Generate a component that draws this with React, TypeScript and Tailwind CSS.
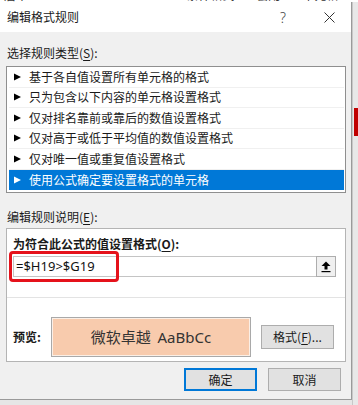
import React from "react";

const Tri = ({ white }: { white?: boolean }) => (
  <svg width="7" height="8" viewBox="0 0 7 8" className="shrink-0">
    <polygon points="0,0.5 7,4 0,7.5" fill={white ? "#ffffff" : "#000000"} />
  </svg>
);

const rules = [
  "基于各自值设置所有单元格的格式",
  "只为包含以下内容的单元格设置格式",
  "仅对排名靠前或靠后的数值设置格式",
  "仅对高于或低于平均值的数值设置格式",
  "仅对唯一值或重复值设置格式",
  "使用公式确定要设置格式的单元格",
];

export default function App() {
  return (
    <div className="w-[358px] h-[405px] overflow-hidden bg-[#e6e6e6] flex flex-col font-['Noto_Sans_CJK_SC',sans-serif] text-[12px] text-[#1a1a1a]">
      {/* excel ribbon remnant */}
      <div className="h-[2px] shrink-0 bg-white overflow-hidden">
        <div className="-mt-[11px] flex gap-[22px] pl-[4px] leading-[12px] text-[12px] text-[#333] whitespace-nowrap">
          <span>居中</span>
          <span className="text-[#2b5797]">■▾</span>
          <span>%</span>
          <span className="text-[#2b5797]">←.0 .00</span>
          <span>条件格式</span>
          <span>套用</span>
          <span>单元格</span>
        </div>
      </div>
      <div className="flex flex-1">
        <div className="w-[352px] shrink-0 flex flex-col">
          <div className="h-[398px] border-r border-b border-[#9a9a9a] flex flex-col">
            {/* title bar */}
            <div className="h-[30px] bg-white flex items-center shrink-0">
              <span className="ml-[7px] flex-1 leading-[16px]">编辑格式规则</span>
              <span className="w-[20px] text-center text-[14px] text-[#444] font-['Noto_Sans',sans-serif] font-light">?</span>
              <svg width="11" height="11" viewBox="0 0 11 11" className="ml-[31px] mr-[16px]">
                <path d="M0.5 0.5 L10.5 10.5 M10.5 0.5 L0.5 10.5" stroke="#333" strokeWidth="1" />
              </svg>
            </div>
            {/* body */}
            <div className="flex-1 bg-[#f0f0f0] px-[6px] flex flex-col">
              <div className="mt-[13px] leading-[16px] pl-[1px]">
                选择规则类型(<span className="underline underline-offset-2">S</span>):
              </div>
              <div className="mt-[5px] w-[340px] border border-[#8f8f8f] bg-white pt-0 pb-[2px] pl-[2px] pr-[1px]">
                {rules.map((r, i) => {
                  const sel = i === 5;
                  return (
                    <div
                      key={r}
                      className={
                        "h-[20.5px] flex items-center pl-[5px] gap-[7px] leading-[16px] " +
                        (sel ? "bg-[#0078d7] text-white" : "border-b border-[#f0f0f0]")
                      }
                    >
                      <Tri white={sel} />
                      <span className="ml-[1px]">{r}</span>
                    </div>
                  );
                })}
              </div>
              <div className="mt-[16px] leading-[16px] pl-[1px]">
                编辑规则说明(<span className="underline underline-offset-2">E</span>):
              </div>
              <div className="relative mt-[3px] w-[340px] h-[134px] border border-[#b4b4b4] bg-white px-[6px] pt-[7px] flex flex-col">
                <div className="leading-[16px] font-bold">
                  为符合此公式的值设置格式(<span className="underline underline-offset-2">O</span>):
                </div>
                <div className="mt-[4px] w-[323px] h-[21px] flex">
                  <div className="flex-1 border-y border-l border-[#c4c4c4] pl-[2px] flex items-center font-['Noto_Sans',sans-serif] text-[13px] text-[#111]">
                    =$H19&gt;$G19
                  </div>
                  <div className="w-[20px] h-[21px] border border-[#adadad] bg-[#f0f0f0] flex items-center justify-center">
                    <svg width="10" height="13" viewBox="0 0 10 13">
                      <polygon points="0.5,6 5,1.5 9.5,6" fill="#000" />
                      <rect x="3.5" y="5.5" width="3" height="4" fill="#000" />
                      <rect x="0.5" y="11" width="9" height="1.2" fill="#000" />
                    </svg>
                  </div>
                </div>
                <div className="mt-[20px] -mx-[6px] h-px bg-[#e3e3e3]" />
                <div className="mt-[19px] flex items-center">
                  <span className="w-[38px] font-bold leading-[16px]">预览:</span>
                  <div className="w-[200px] h-[40px] border border-[#a9a9a9] bg-[#fbefe6] p-px">
                    <div className="h-full bg-[#f8cbad] flex items-center justify-center text-[15px] text-[#333] whitespace-pre">
                      微软卓越  <span className="font-['Noto_Sans',sans-serif] text-[15px]">AaBbCc</span>
                    </div>
                  </div>
                  <div className="ml-[10px] w-[73px] h-[24px] border border-[#adadad] bg-[#e1e1e1] flex items-center justify-center leading-[16px]">
                    格式(<span className="underline underline-offset-2">F</span>)...
                  </div>
                </div>
                <div className="absolute left-[2px] top-[22px] w-[110px] h-[31px] border-[3px] border-[#e5121b] rounded-[4px]" />
              </div>
              <div className="mt-[6px] flex justify-end gap-[11px] pr-[4px]">
                <div className="w-[73px] h-[23px] border-2 border-[#0078d7] bg-[#e1e1e1] flex items-center justify-center leading-[16px]">
                  确定
                </div>
                <div className="w-[73px] h-[23px] border border-[#adadad] bg-[#e1e1e1] flex items-center justify-center leading-[16px]">
                  取消
                </div>
              </div>
            </div>
          </div>
        </div>
        <div className="flex-1 flex flex-col pl-[1px] bg-[#e8e8e8] border-l border-[#c8c8c8]">
          <div className="h-[106px]" />
          <div className="h-[28px] bg-[#c00000]" />
        </div>
      </div>
    </div>
  );
}
